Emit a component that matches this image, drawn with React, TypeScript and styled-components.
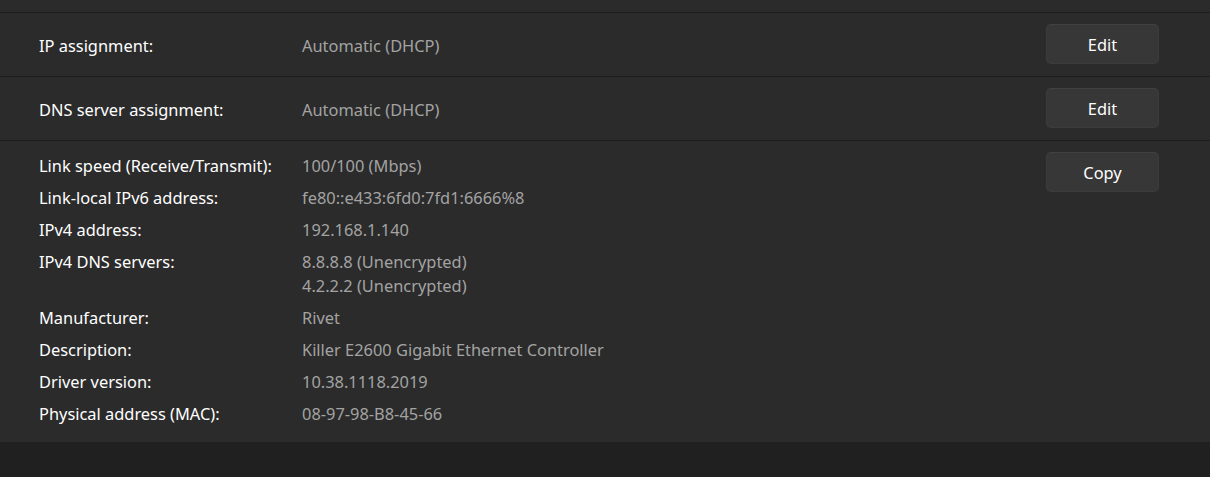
import { Fragment } from "react";
import styled, { createGlobalStyle } from "styled-components";

const GlobalStyle = createGlobalStyle`
  html, body {
    margin: 0;
    padding: 0;
    background: #202020;
  }
  body {
    font-family: "Noto Sans", "Open Sans", sans-serif;
    -webkit-font-smoothing: antialiased;
  }
`;

interface IDetail {
  label: string,
  values: string[],
}

const details: IDetail[] = [
  { label: "Link speed (Receive/Transmit):", values: ["100/100 (Mbps)"] },
  { label: "Link-local IPv6 address:", values: ["fe80::e433:6fd0:7fd1:6666%8"] },
  { label: "IPv4 address:", values: ["192.168.1.140"] },
  { label: "IPv4 DNS servers:", values: ["8.8.8.8 (Unencrypted)", "4.2.2.2 (Unencrypted)"] },
  { label: "Manufacturer:", values: ["Rivet"] },
  { label: "Description:", values: ["Killer E2600 Gigabit Ethernet Controller"] },
  { label: "Driver version:", values: ["10.38.1118.2019"] },
  { label: "Physical address (MAC):", values: ["08-97-98-B8-45-66"] },
];

const Page = styled.div`
  width: 1210px;
  height: 477px;
  overflow: hidden;
  background: #202020;
`;

const Panel = styled.section`
  background: #2b2b2b;
  display: flex;
  flex-direction: column;
`;

const TopStrip = styled.div`
  height: 12px;
  border-bottom: 1px solid #1d1d1d;
`;

const Row = styled.div<{ $last?: boolean }>`
  display: flex;
  align-items: flex-start;
  padding: ${(p) => (p.$last ? "11px 51px 16px 39px" : "11px 51px 12px 39px")};
  border-bottom: 1px solid ${(p) => (p.$last ? "transparent" : "#1d1d1d")};
`;

const Grid = styled.div`
  flex: 1;
  display: grid;
  grid-template-columns: 263px 1fr;
  row-gap: 8px;
  padding-top: 2px;
  margin-bottom: -1px;
`;

const Label = styled.div`
  color: #ffffff;
  font-size: 16.4px;
  line-height: 24px;
  white-space: nowrap;
`;

const Value = styled.div`
  color: #a3a3a3;
  font-size: 16.4px;
  line-height: 24px;
  white-space: nowrap;
`;

const SingleLine = styled.div`
  flex: 1;
  display: grid;
  grid-template-columns: 263px 1fr;
  align-items: center;
  height: 40px;
  padding-top: 3px;
  box-sizing: border-box;
`;

const Button = styled.button`
  width: 113px;
  height: 40px;
  flex-shrink: 0;
  background: #373737;
  border: 1px solid #3c3c3c;
  border-top-color: #414141;
  border-radius: 5px;
  color: #ffffff;
  font-family: "Noto Sans", "Open Sans", sans-serif;
  font-size: 16.4px;
  padding: 0;
  cursor: default;
`;

const App = () => {
  return (
    <Page>
      <GlobalStyle />
      <Panel>
        <TopStrip />
        <Row>
          <SingleLine>
            <Label>IP assignment:</Label>
            <Value>Automatic (DHCP)</Value>
          </SingleLine>
          <Button>Edit</Button>
        </Row>
        <Row>
          <SingleLine>
            <Label>DNS server assignment:</Label>
            <Value>Automatic (DHCP)</Value>
          </SingleLine>
          <Button>Edit</Button>
        </Row>
        <Row $last>
          <Grid>
            {details.map((d) => (
              <Fragment key={d.label}>
                <Label>{d.label}</Label>
                <Value>
                  {d.values.map((v) => (
                    <div key={v}>{v}</div>
                  ))}
                </Value>
              </Fragment>
            ))}
          </Grid>
          <Button>Copy</Button>
        </Row>
      </Panel>
    </Page>
  );
};

export default App;
